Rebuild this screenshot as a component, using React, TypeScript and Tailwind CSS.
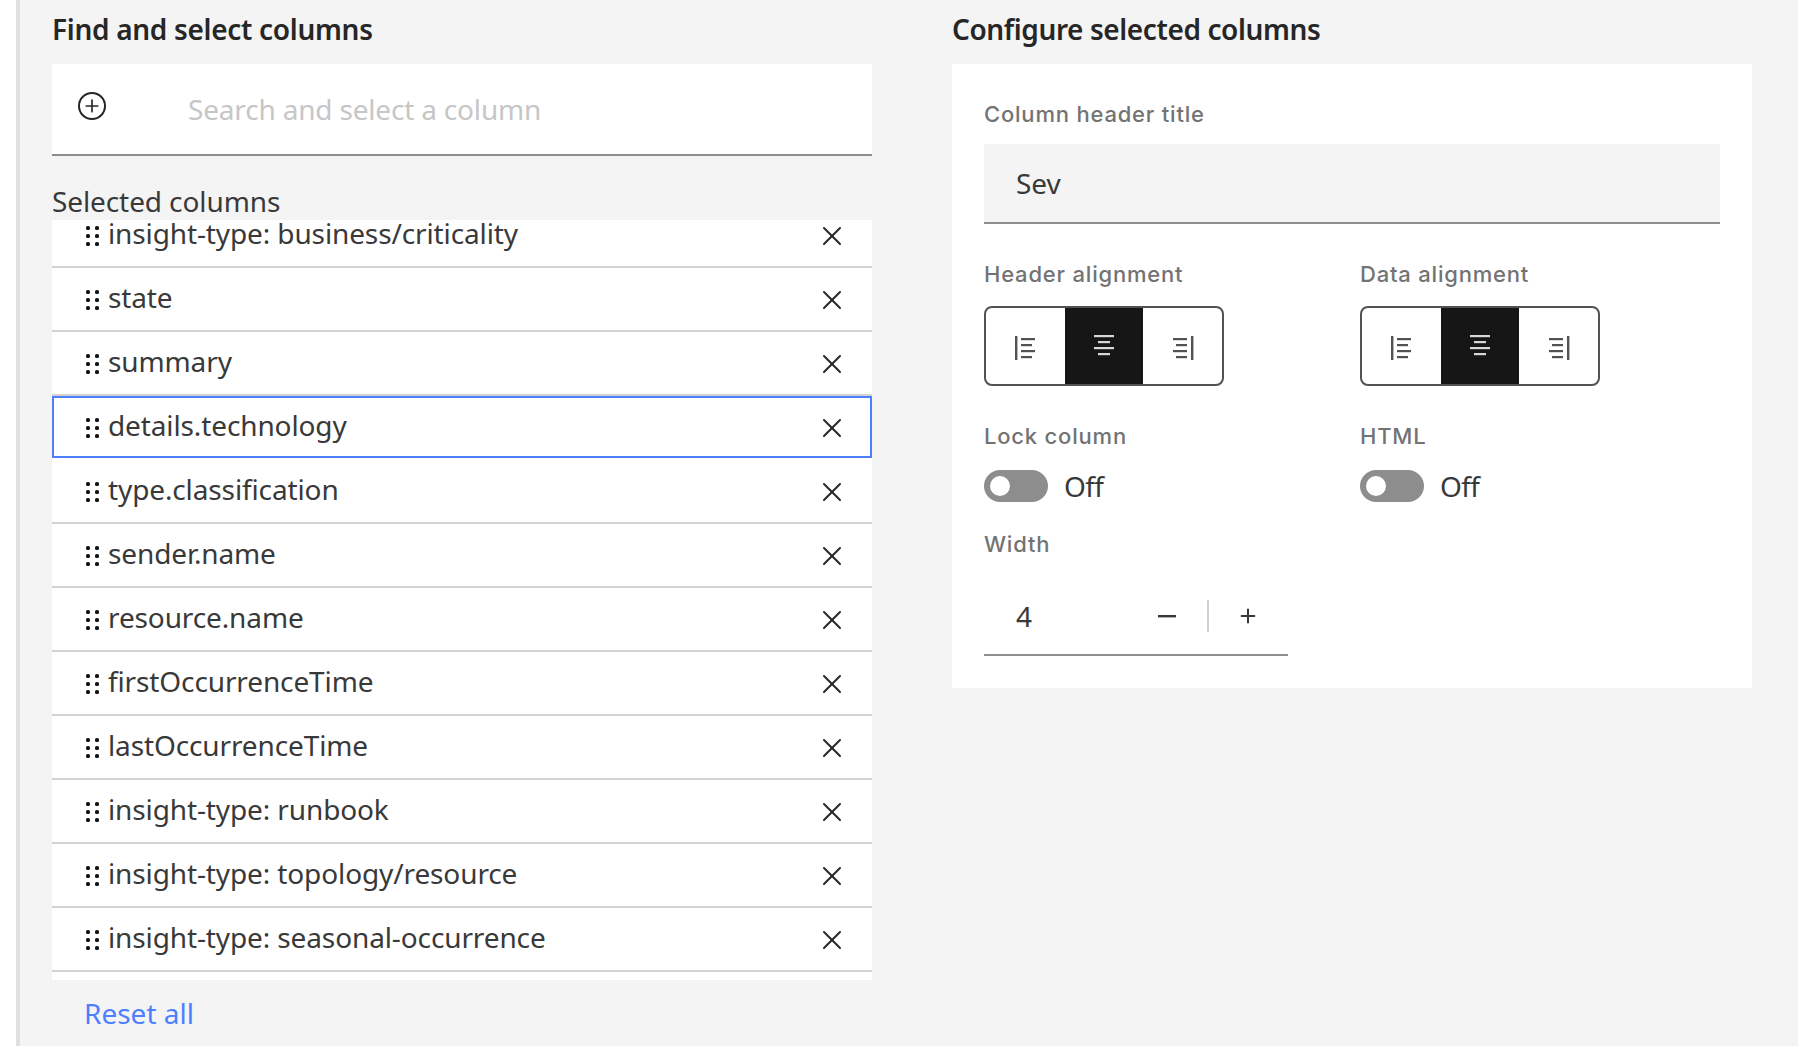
import { Plus, X } from 'lucide-react'

const COLUMNS = [
  'insight-type: business/criticality',
  'state',
  'summary',
  'details.technology',
  'type.classification',
  'sender.name',
  'resource.name',
  'firstOccurrenceTime',
  'lastOccurrenceTime',
  'insight-type: runbook',
  'insight-type: topology/resource',
  'insight-type: seasonal-occurrence',
]

function Grip() {
  return (
    <svg width="16" height="24" viewBox="0 0 16 24" className="shrink-0 translate-y-px text-[#161616]" fill="currentColor">
      <rect x="1" y="2" width="4" height="4" rx="1.5" />
      <rect x="10" y="2" width="4" height="4" rx="1.5" />
      <rect x="1" y="10" width="4" height="4" rx="1.5" />
      <rect x="10" y="10" width="4" height="4" rx="1.5" />
      <rect x="1" y="18" width="4" height="4" rx="1.5" />
      <rect x="10" y="18" width="4" height="4" rx="1.5" />
    </svg>
  )
}

function AlignIcon({ side, active }: { side: 'left' | 'center' | 'right'; active?: boolean }) {
  return (
    <svg
      width="24"
      height="26"
      viewBox="0 0 24 26"
      fill="currentColor"
      className={active ? 'translate-y-px text-[#d8d8d8]' : 'translate-y-0.5 text-[#525252]'}
    >
      {side === 'left' && (
        <>
          <rect x="2" y="1" width="2.4" height="24" />
          <rect x="8" y="3" width="14" height="2.2" />
          <rect x="8" y="9" width="11" height="2.2" />
          <rect x="8" y="15" width="14" height="2.2" />
          <rect x="8" y="21" width="11" height="2.2" />
        </>
      )}
      {side === 'center' && (
        <>
          <rect x="2" y="1" width="20" height="2.2" />
          <rect x="6" y="7" width="12" height="2.2" />
          <rect x="2" y="13" width="20" height="2.2" />
          <rect x="6" y="19" width="12" height="2.2" />
        </>
      )}
      {side === 'right' && (
        <>
          <rect x="20" y="1" width="2.4" height="24" />
          <rect x="2" y="3" width="14" height="2.2" />
          <rect x="5" y="9" width="11" height="2.2" />
          <rect x="2" y="15" width="14" height="2.2" />
          <rect x="5" y="21" width="11" height="2.2" />
        </>
      )}
    </svg>
  )
}

function AlignGroup() {
  return (
    <div className="flex h-[80px] w-[240px] overflow-hidden rounded-lg border-2 border-[#525252] bg-white">
      <div className="flex flex-1 items-center justify-center">
        <AlignIcon side="left" />
      </div>
      <div className="flex flex-1 items-center justify-center bg-[#161616]">
        <AlignIcon side="center" active />
      </div>
      <div className="flex flex-1 items-center justify-center">
        <AlignIcon side="right" />
      </div>
    </div>
  )
}

function Toggle() {
  return (
    <div className="mt-[16px] flex h-[36px] items-center gap-4">
      <div className="flex h-[32px] w-[64px] items-center rounded-full bg-[#8d8d8d] pl-[6px]">
        <span className="h-[20px] w-[20px] rounded-full bg-white" />
      </div>
      <span className="text-[28px] leading-[36px] tracking-[-0.6px] text-[#393939]">Off</span>
    </div>
  )
}

function Label({ children }: { children: string }) {
  return (
    <div className="font-['Inter',sans-serif] text-[22px] font-medium leading-[32px] tracking-[0.8px] text-[#737373]">
      {children}
    </div>
  )
}

export default function App() {
  return (
    <div className="flex h-[1046px] overflow-hidden bg-white font-['Noto_Sans',sans-serif] text-[#161616]">
      <div className="w-4 shrink-0 bg-white" />
      <main className="flex flex-1 gap-[80px] border-l-4 border-[#e0e0e0] bg-[#f4f4f4] pl-8">
        {/* Find and select */}
        <section className="w-[820px] shrink-0">
          <h2 className="h-[64px] pt-[11px] text-[28px] font-semibold leading-9 tracking-[-0.3px] text-[#262626]">
            Find and select columns
          </h2>
          <div className="flex h-[92px] items-center border-b-2 border-[#8d8d8d] bg-white">
            <div className="ml-[26px] flex h-7 w-7 -translate-y-[3px] items-center justify-center rounded-full border-2 border-[#262626]">
              <Plus size={20} strokeWidth={2} className="text-[#262626]" />
            </div>
            <span className="ml-[82px] text-[28px] leading-9 tracking-[-0.18px] text-[#c6c6c6]">
              Search and select a column
            </span>
          </div>
          <div className="h-[64px] pt-[27px] text-[28px] leading-9 tracking-[-0.1px] text-[#393939]">Selected columns</div>
          <div className="h-[760px] overflow-hidden bg-white">
            <ul className="-mt-4">
              {COLUMNS.map((name, i) => (
                <li
                  key={name}
                  className={i === 3 ? 'h-[64px] border-b-2 border-white' : 'h-[64px] border-b-2 border-[#d4d4d4]'}
                >
                  <div
                    className={
                      i === 3
                        ? 'flex h-[62px] items-center border-2 border-[#4d7fff] pl-[31px] pr-[22px]'
                        : 'flex h-[62px] items-center border-2 border-transparent pl-[31px] pr-[22px]'
                    }
                  >
                    <Grip />
                    <span className="ml-[7px] -translate-y-0.5 flex-1 text-[28px] leading-9 tracking-[-0.12px] text-[#393939]">
                      {name}
                    </span>
                    <X size={32} strokeWidth={1.5} className="translate-y-px text-[#262626]" />
                  </div>
                </li>
              ))}
            </ul>
          </div>
          <div className="pl-8 pt-[15px] text-[28px] leading-9 text-[#4d7fff]">Reset all</div>
        </section>

        {/* Configure selected */}
        <section className="w-[800px] shrink-0">
          <h2 className="h-[64px] pt-[11px] text-[28px] font-semibold leading-9 tracking-[-0.4px] text-[#262626]">
            Configure selected columns
          </h2>
          <div className="h-[624px] bg-white px-8 pt-[34px]">
            <Label>Column header title</Label>
            <div className="mt-[14px] flex h-[80px] items-center border-b-2 border-[#8d8d8d] bg-[#f4f4f4] pl-8 text-[28px] leading-9 text-[#393939]">
              Sev
            </div>
            <div className="mt-[34px] grid grid-cols-[376px_1fr]">
              <div>
                <Label>Header alignment</Label>
                <div className="mt-4">
                  <AlignGroup />
                </div>
              </div>
              <div>
                <Label>Data alignment</Label>
                <div className="mt-4">
                  <AlignGroup />
                </div>
              </div>
              <div className="mt-[34px]">
                <Label>Lock column</Label>
                <Toggle />
              </div>
              <div className="mt-[34px]">
                <Label>HTML</Label>
                <Toggle />
              </div>
            </div>
            <div className="mt-[24px]">
              <Label>Width</Label>
              <div className="mt-[26px] flex h-[70px] w-[304px] items-center border-b-2 border-[#8d8d8d] pb-[8px] pl-8 text-[28px] text-[#393939]">
                <span className="w-[131px] leading-9">4</span>
                <span className="flex w-[40px] justify-center text-[#393939]">
                  <svg width="18" height="4" viewBox="0 0 18 4" fill="currentColor">
                    <rect width="18" height="2.4" y="1" />
                  </svg>
                </span>
                <span className="ml-[20px] h-8 w-0.5 bg-[#d0d0d0]" />
                <span className="ml-[19px] flex w-[40px] justify-center">
                  <Plus size={22} strokeWidth={2.2} className="text-[#393939]" />
                </span>
              </div>
            </div>
          </div>
        </section>
      </main>
    </div>
  )
}
